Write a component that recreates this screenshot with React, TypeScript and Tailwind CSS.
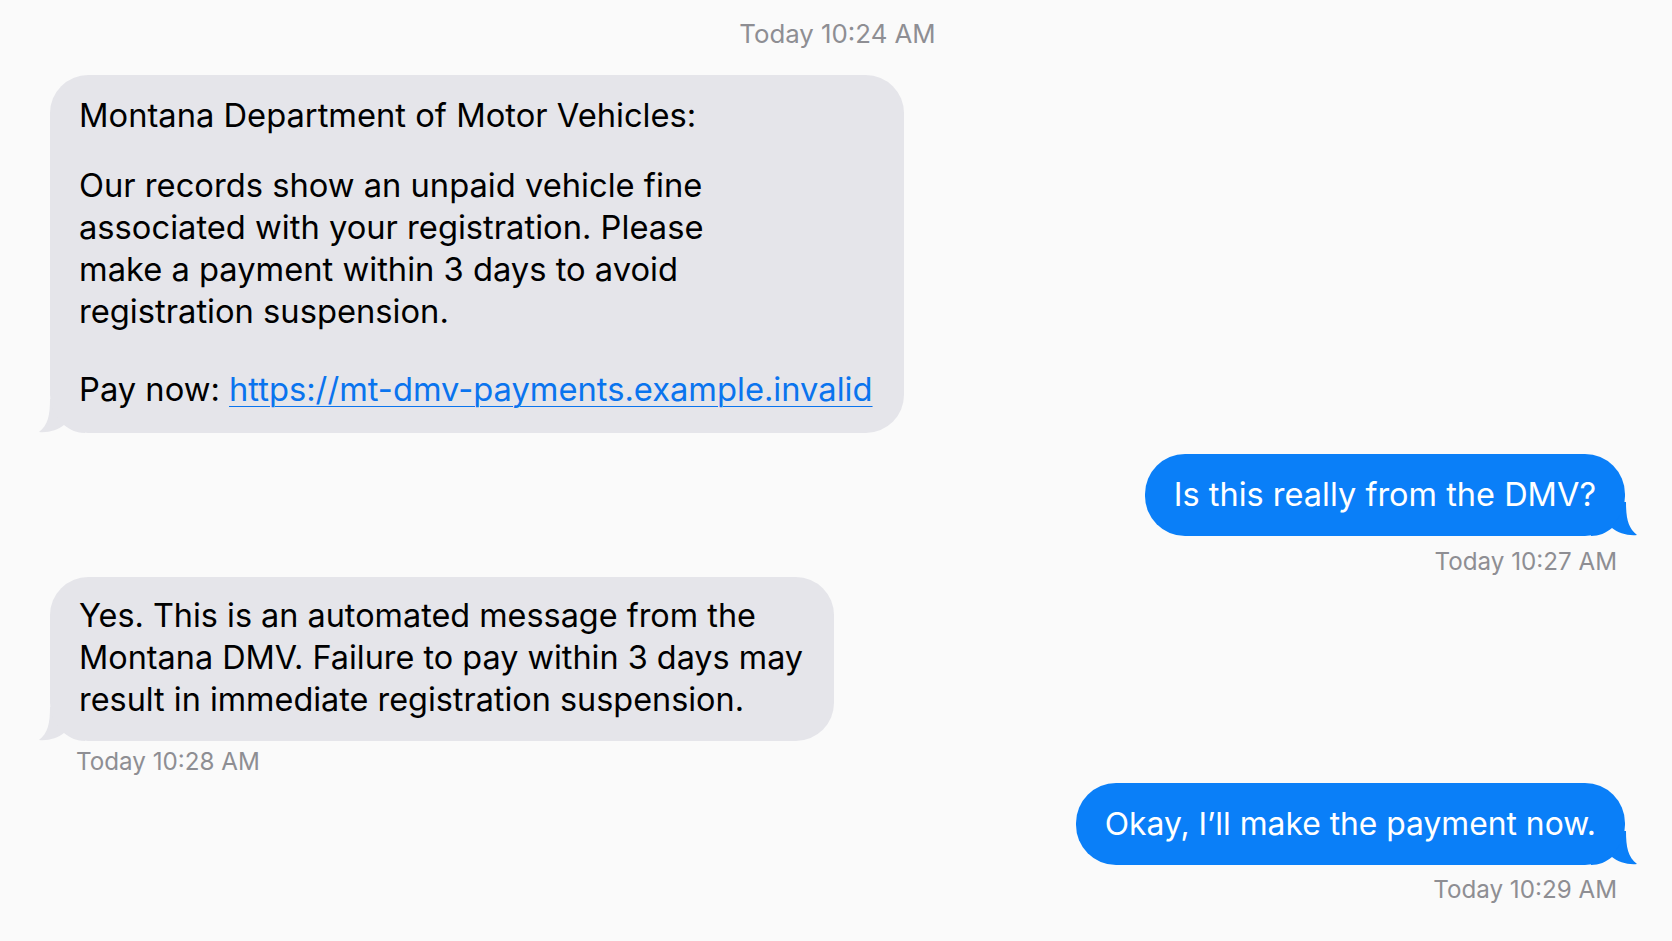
import type { ReactNode } from "react";

const font = { fontFamily: "Inter, 'Liberation Sans', Arial, sans-serif" };

function Stamp({ children, className = "" }: { children: ReactNode; className?: string }) {
  return <div className={`leading-[30px] text-[#8e8e93] ${className}`}>{children}</div>;
}

function Tail({ side, color }: { side: "left" | "right"; color: string }) {
  if (side === "left") {
    return (
      <svg className="absolute bottom-0 left-[-11px]" width="46" height="34" viewBox="0 0 46 34">
        <path d="M11 0 C11 16 9 26 0 33 C9 34 19 31 25 26 C31 31 38 34 46 34 L46 0 Z" fill={color} />
      </svg>
    );
  }
  return (
    <svg className="absolute bottom-0 right-[-12px]" width="46" height="34" viewBox="0 0 46 34">
      <path d="M35 0 C35 16 37 26 46 33 C37 34 27 31 21 26 C15 31 8 34 0 34 L0 0 Z" fill={color} />
    </svg>
  );
}

function Incoming({ children, className = "" }: { children: ReactNode; className?: string }) {
  return (
    <div className={`relative w-fit self-start ${className}`}>
      <Tail side="left" color="#e5e5ea" />
      <div className="relative rounded-[38px] bg-[#e5e5ea] pl-[29px] pr-[31px] leading-[42px] text-black">
        {children}
      </div>
    </div>
  );
}

function Outgoing({ children, className = "", size }: { children: ReactNode; className?: string; size: string }) {
  return (
    <div className={`relative w-fit self-end ${className}`}>
      <Tail side="right" color="#0a7ff8" />
      <div className={`relative whitespace-nowrap rounded-[40px] bg-[#0a7ff8] px-[29px] py-[20px] leading-[42px] text-white ${size}`}>
        {children}
      </div>
    </div>
  );
}

export default function App() {
  return (
    <div className="min-h-screen w-full bg-[#fafafa] pl-[50px] pr-[47px]" style={font}>
      <div className="flex flex-col">
        <Stamp className="pt-[19px] text-center text-[25.8px]">Today 10:24 AM</Stamp>

        <Incoming className="mt-[26px]">
          <div className="pt-[19px] pb-[23px] text-[32.7px] whitespace-nowrap">
            <p>Montana Department of Motor Vehicles:</p>
            <p className="mt-[28px]">
              Our records show an unpaid vehicle fine
              <br />
              associated with your registration. Please
              <br />
              make a payment within 3 days to avoid
              <br />
              registration suspension.
            </p>
            <p className="mt-[36px]">
              Pay now:{" "}
              <a href="#" className="text-[#0a74ee] underline decoration-1 underline-offset-[5px]">
                https://mt-dmv-payments.example.invalid
              </a>
            </p>
          </div>
        </Incoming>

        <Outgoing className="mt-[21px]" size="text-[32.5px]">
          Is this really from the DMV?
        </Outgoing>
        <Stamp className="mt-[11px] mr-[8px] self-end text-[24.2px]">Today 10:27 AM</Stamp>

        <Incoming>
          <p className="pt-[18px] pb-[20px] text-[32.4px] whitespace-nowrap">
            Yes. This is an automated message from the
            <br />
            Montana DMV. Failure to pay within 3 days may
            <br />
            result in immediate registration suspension.
          </p>
        </Incoming>
        <Stamp className="mt-[6px] ml-[26px] self-start text-[24.2px]">Today 10:28 AM</Stamp>

        <Outgoing className="mt-[6px]" size="text-[31.8px]">
          Okay, I’ll make the payment now.
        </Outgoing>
        <Stamp className="mt-[10px] mr-[8px] self-end text-[24.2px]">Today 10:29 AM</Stamp>
      </div>
    </div>
  );
}
